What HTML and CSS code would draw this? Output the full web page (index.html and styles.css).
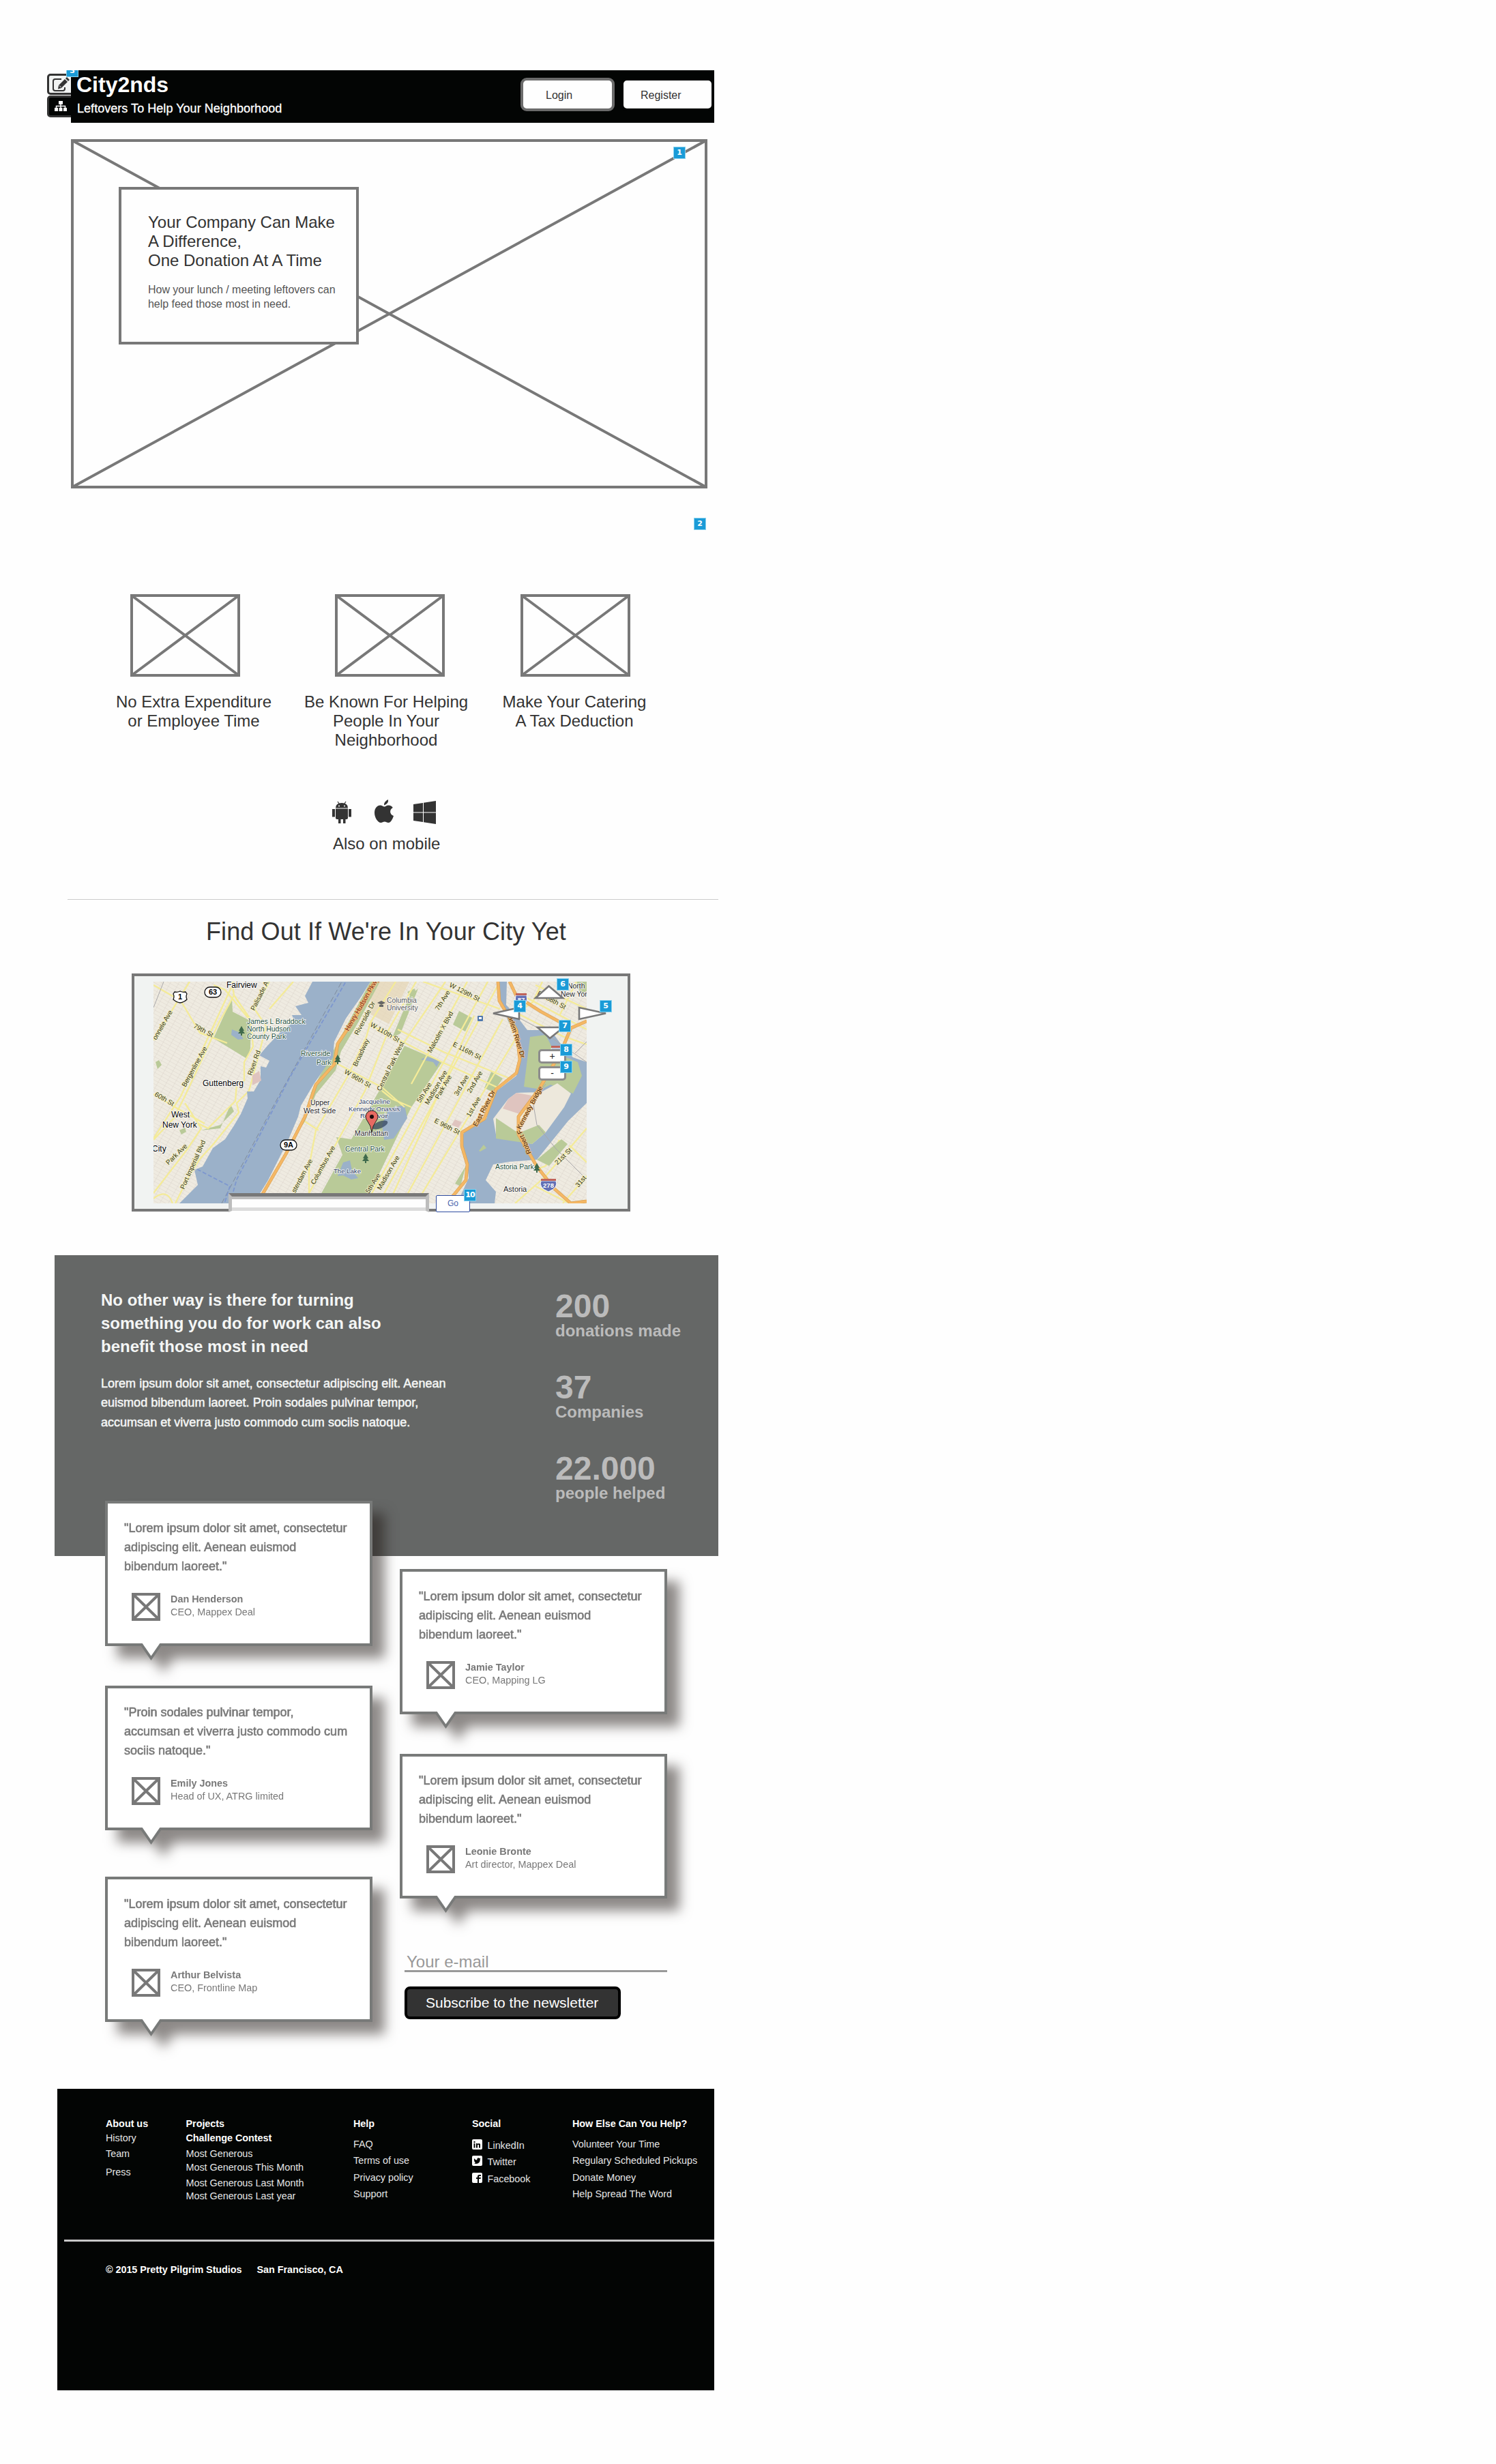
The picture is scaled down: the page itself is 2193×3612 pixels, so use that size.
FILE: index.html
```html
<!DOCTYPE html>
<html lang="en">
<head>
<meta charset="utf-8">
<title>City2nds</title>
<link rel="stylesheet" href="styles.css">
</head>
<body>
<header class="header">
  <div class="tools">
    <div class="tool tool-light"><svg width="26" height="24" viewBox="0 0 26 24"><path d="M14 3H5Q2 3 2 6V17Q2 20 5 20H16Q19 20 19 17V15" fill="none" stroke="#333" stroke-width="2"/><path d="M10 12L19 3L23 7L14 16L9 17.500Z" fill="#333"/><path d="M20 2L22 0L26 4L24 6Z" fill="#333"/><path d="M11 12.500L13.500 15" stroke="#f1f3f2"/></svg></div>
    <div class="tool tool-dark"><svg width="20" height="16" viewBox="0 0 20 16"><path d="M7 0h6v5H7zM1 10h5v5H1zM7.500 10h5v5h-5zM14 10h5v5h-5z" fill="#fff"/><path d="M10 4V10M3.500 10V7.500H16.500V10" stroke="#fff" stroke-width="1.500" fill="none"/></svg></div>
  </div>
  <div class="badge-clip"><span class="badge badge-3">3</span></div>
  <div class="brand">
    <h1 class="brand-name">City2nds</h1>
    <p class="brand-tag">Leftovers To Help Your Neighborhood</p>
  </div>
  <nav class="account">
    <a class="account-btn login">Login</a>
    <a class="account-btn register">Register</a>
  </nav>
</header>

<section class="hero">
  <svg class="hero-image" width="933" height="512"><path d="M2 2H931V510H2ZL931 510M931 2L2 510" class="wire"/></svg>
  <div class="hero-card">
    <h2 class="hero-title">Your Company Can Make<br>A Difference,<br>One Donation At A Time</h2>
    <p class="hero-text">How your lunch / meeting leftovers can<br>help feed those most in need.</p>
  </div>
  <span class="badge badge-1">1</span>
</section>

<section class="features">
  <span class="badge badge-2">2</span>
  <figure class="feature"><svg class="pic-a" width="161" height="121"><path d="M2 2H159V119H2ZL159 119M159 2L2 119" class="wire"/></svg><figcaption>No Extra Expenditure<br>or Employee Time</figcaption></figure>
  <figure class="feature"><svg class="pic-b" width="161" height="121"><path d="M2 2H159V119H2ZL159 119M159 2L2 119" class="wire"/></svg><figcaption>Be Known For Helping<br>People In Your<br>Neighborhood</figcaption></figure>
  <figure class="feature"><svg class="pic-c" width="161" height="121"><path d="M2 2H159V119H2ZL159 119M159 2L2 119" class="wire"/></svg><figcaption>Make Your Catering<br>A Tax Deduction</figcaption></figure>
</section>

<section class="mobile">
  <div class="mobile-icons">
    <svg width="28" height="34" viewBox="0 0 28 34"><path d="M5 10.500Q5 3 14 3Q23 3 23 10.500ZM5 11.500H23V25Q23 27 21 27H19.500V33H16V27H12.500V33H9V27H7Q5 27 5 25ZM0 12H4V23.500H0ZM24 12H28V23.500H24Z" fill="#333"/><path d="M8 1L10 4M20 1L18 4" stroke="#333" stroke-width="1.200"/><circle cx="10" cy="7.500" r="1" fill="#fff"/><circle cx="18" cy="7.500" r="1" fill="#fff"/></svg>
    <svg width="28" height="36" viewBox="0 0 28 36"><path d="M20 0Q21 6 14 8.500Q13.500 3 20 0Z" fill="#333"/><path d="M14.500 10.500C16 10.500 17.500 8.500 20.500 8.500C23.500 8.500 25.500 10 26.800 12C21.500 15 22 22 28 24C26.500 29 23.500 34 20.500 34C18 34 17 32.600 14.800 32.600C12.500 32.600 11.500 34 9.300 34C5 34 0 26.500 0 19.500C0 12.500 4 8.500 8.300 8.500C11 8.500 13 10.500 14.500 10.500Z" fill="#333"/></svg>
    <svg width="33" height="34" viewBox="0 0 33 34"><path d="M0 5L14 3V16.500H0ZM15 2.800L33 0V16.500H15ZM0 17.500H14V31L0 29ZM15 17.500H33V34L15 31.200Z" fill="#333"/></svg>
  </div>
  <p class="mobile-text">Also on mobile</p>
</section>

<section class="finder">
  <h2 class="finder-title">Find Out If We're In Your City Yet</h2>
  <div class="map-frame">
    <svg class="map" width="635" height="325" viewBox="0 0 635 325">
      <defs>
        <pattern id="blocks" width="11" height="5" patternUnits="userSpaceOnUse" patternTransform="rotate(29)"><path d="M0 0H11M0 0V5" stroke="#d2cbc1" stroke-width=".7" fill="none"/></pattern>
      </defs>
      <rect width="635" height="325" fill="#efebe1"/>
      <rect width="635" height="325" fill="url(#blocks)"/>
      <path d="M320 0H375L345 62L318 48Z" fill="#e5d5b5" opacity=".7"/>
      <g fill="#b9ca98">
        <path d="M115 24L88 83L137 113L142 98L143 58L116 44Z"/>
        <path d="M368 94L423 118L378 184L310 325H238L277 254L268 228L290 231L332 158Z"/>
        <path d="M448 43L467 53L457 73L439 63ZM495 132L512 142L498 162L485 156ZM375 22L388 10L362 76L350 82Z"/>
        <path d="M318 0H332L300 60L275 102L267 130L238 165L222 205L215 215L232 160Z"/>
        <path d="M3 118L8 115L12 122L6 128ZM98 215L113 180L118 190L98 210L80 215L70 218ZM372 15L383 10L385 18L377 22ZM38 218l8-4l2 6l-7 4ZM620 0H635V14L626 18Z"/>
      </g>
      <path d="M368 181L372 200L365 211L352 230L338 232L335 210L345 186ZM392 114L400 110L420 116L415 125L410 118ZM278 265L288 262L291 276L300 288L290 290L278 284L270 285Z" fill="#9bb1c9"/>
      <g class="road">
        <path d="M53 0L0 86M118 0L40 168L0 230M118 20L96 60L46 168L30 200L0 232M115 0L118 20L142 55L146 95L133 118L133 145L122 150L120 175L80 215L64 207M170 0L148 40L165 65L155 105L140 160L122 178L125 192L88 238L68 260L52 285L32 325M0 5L40 28L68 75L108 90M0 165L35 186L75 208M205 0L170 40M88 5L105 12L140 55M46 178L70 215L50 245L0 310M0 318Q20 302 28 325"/>
        <path d="M355 0L318 60L312 81L285 138L238 218L228 271L228 325M385 0L345 70L310 160L220 325M315 62L423 118L515 160M265 118L335 155L368 184M358 70L425 103L530 145M428 0L360 100M460 0L378 150M395 0L508 40M490 0L312 325M508 0L330 325M470 50L345 325M512 55L365 325M530 85L385 325M222 205L242 218M335 160L350 172L378 184"/>
        <path d="M540 20L635 70M530 45L600 80L635 92M570 0L556 30L520 55M620 0L595 50M560 5L635 40M560 85L590 105L600 98M530 325L575 285L635 215M610 240L635 265M560 300L610 325M600 325L635 285M595 232L575 270L562 275"/>
      </g>
      <g fill="#9bb1c9">
        <path d="M233 0L222 21L227 31L208 36L217 49L203 49L207 59L190 70L167 94L155 108L170 116L165 126L157 124L157 144L147 161L137 161L138 171L128 194L118 211L105 231L87 244L72 271L60 276L65 298L38 325H147L168 291L198 231L212 198L216 182L235 150L255 121L263 111L265 88L282 54L305 21L318 0Z"/>
        <path d="M503 0L508 28L520 58L535 81L538 114L532 138L498 164L488 201L455 221L450 238L460 264L462 288L445 325H500L502 308L487 291L498 268L522 264L562 261L608 204L635 178V118L615 111L602 98L582 71L548 71L535 54L517 34L518 0Z"/>
        <path d="M115 70L125 74L132 84L124 85L114 78Z"/>
      </g>
      <path d="M552 81L575 78L588 104L622 118L628 138L615 164L582 151L568 158L543 154L548 114Z" fill="#b9ca98"/>
      <path d="M520 172L532 163L568 162L592 149L612 164L602 184L575 221L555 238L502 224L498 201Z" fill="#ede8dc"/>
      <path d="M502 200L535 222L565 210L575 221L555 238L502 230ZM598 231L607 238L580 270L562 261ZM458 270L450 300L442 296ZM477 248l7-9l4 5l-9 5Z" fill="#b9ca98"/>
      <path d="M520 172L532 163L555 167L540 195L512 186ZM145 137L155 131L158 145L145 152ZM442 202L452 206L447 214L437 210Z" fill="#dfc4bf"/>
      <path d="M100 325L178 178L276 0" stroke="#7f8b9c" stroke-dasharray="8 4" fill="none"/>
      <path d="M112 325L122 290L200 140L282 0M64 275L112 300L104 325" stroke="#7d97cf" stroke-width="1.800" stroke-dasharray="6 3" fill="none"/>
      <path d="M530 50L560 66L635 118M575 150L556 175L562 210L590 245L635 290M618 105L635 88M0 38L15 0" stroke="#a9a8ab" fill="none"/>
      <g fill="none" stroke-linejoin="round">
        <path class="hw-edge" d="M325 0L295 54L270 91L265 121L238 151L222 198L195 251L152 325M505 0L507 28L532 71L537 114L532 134L502 158L485 201L452 221L452 241L460 268L458 291L430 325M522 0L532 21L568 44L612 68L635 58M612 68L598 101L585 124L565 158L535 198L535 224L562 271L588 304L612 325L635 322"/>
        <path class="hw" d="M325 0L295 54L270 91L265 121L238 151L222 198L195 251L152 325M505 0L507 28L532 71L537 114L532 134L502 158L485 201L452 221L452 241L460 268L458 291L430 325M522 0L532 21L568 44L612 68L635 58M612 68L598 101L585 124L565 158L535 198L535 224L562 271L588 304L612 325L635 322"/>
      </g>
      <g class="street">
        <text transform="translate(148 43) rotate(-63)">Palisade Av</text>
        <text transform="translate(4 86) rotate(-60)">onnele Ave</text>
        <text transform="translate(58 67) rotate(28)">79th St</text>
        <text transform="translate(144 138) rotate(-70)">River Rd</text>
        <text transform="translate(47 155) rotate(-61)">Bergenline Ave</text>
        <text transform="translate(1 167) rotate(30)">60th St</text>
        <text transform="translate(22 269) rotate(-44)">Park Ave</text>
        <text transform="translate(45 305) rotate(-66)">Port Imperial Blvd</text>
        <text class="red" transform="translate(286 73) rotate(-60)">Henry Hudson Pkwy</text>
        <text transform="translate(300 79) rotate(-62)">Riverside Dr</text>
        <text transform="translate(317 65) rotate(30)">W 110th St</text>
        <text transform="translate(298 125) rotate(-65)">Broadway</text>
        <text transform="translate(279 134) rotate(30)">W 96th St</text>
        <text transform="translate(333 161) rotate(-64)">Central Park West</text>
        <text transform="translate(236 298) rotate(-61)">Columbus Ave</text>
        <text transform="translate(208 310) rotate(-62)">sterdam Ave</text>
        <text transform="translate(316 311) rotate(-58)">5th Ave</text>
        <text transform="translate(333 306) rotate(-60)">Madison Ave</text>
        <text transform="translate(418 43) rotate(-58)">7th Ave</text>
        <text transform="translate(433 7) rotate(27)">W 129th St</text>
        <text transform="translate(407 105) rotate(-61)">Malcolm X Blvd</text>
        <text transform="translate(438 94) rotate(27)">E 116th St</text>
        <text transform="translate(391 178) rotate(-58)">5th Ave</text>
        <text transform="translate(403 181) rotate(-60)">Madison Ave</text>
        <text transform="translate(418 173) rotate(-60)">Park Ave</text>
        <text transform="translate(446 168) rotate(-60)">3rd Ave</text>
        <text transform="translate(465 164) rotate(-60)">2nd Ave</text>
        <text transform="translate(464 199) rotate(-60)">1st Ave</text>
        <text transform="translate(411 206) rotate(27)">E 96th St</text>
        <text class="brown" transform="translate(474 213) rotate(-62)">East River Dr</text>
        <text class="brown" transform="translate(520 52) rotate(73)">arlem River Dr</text>
        <text class="brown" transform="translate(538 217) rotate(-62)">Kennedy Bridge</text>
        <text class="brown" transform="translate(554 251) rotate(-114)">Robert F</text>
        <text transform="translate(562 19) rotate(28)">E 138th St</text>
        <text transform="translate(592 269) rotate(-44)">21st St</text>
        <text transform="translate(623 302) rotate(-50)">31st</text>
      </g>
      <g class="place">
        <text class="town" x="107" y="9">Fairview</text><text class="town" x="72" y="153">Guttenberg</text>
        <text class="town" x="26" y="199">West</text><text class="town" x="13" y="214">New York</text><text class="town" x="-2" y="249">City</text>
        <text class="park" x="137" y="62">James L Braddock</text><text class="park" x="137" y="73">North Hudson</text><text class="park" x="137" y="84">County Park</text>
        <text class="park" x="216" y="109">Riverside</text><text class="park" x="239" y="122">Park</text>
        <text x="230" y="181">Upper</text><text x="220" y="193">West Side</text>
        <text class="lake" x="301" y="179">Jacqueline</text><text class="lake" x="286" y="190">Kennedy Onassis</text><text class="lake" x="303" y="200">Reservoir</text>
        <text x="295" y="226">Manhattan</text><text class="park" x="281" y="249">Central Park</text><text class="lake" x="264" y="281">The Lake</text>
        <text class="school" x="342" y="31">Columbia</text><text class="school" x="342" y="42">University</text>
        <text x="607" y="10">North</text><text x="597" y="22">New Yor</text>
        <text class="park" x="501" y="275">Astoria Park</text><text class="astoria" x="513" y="308">Astoria</text>
      </g>
      <path d="M129 65l4 7h-2l3 4h-4v3h-2v-3h-4l3-4h-2ZM270 107l4 7h-2l3 4h-4v3h-2v-3h-4l3-4h-2ZM311 252l4 7h-2l3 4h-4v3h-2v-3h-4l3-4h-2ZM562 266l4 7h-2l3 4h-4v3h-2v-3h-4l3-4h-2Z" fill="#3f6a4c"/>
      <path d="M328 31l6-3l6 3l-6 3ZM331 34v3h6v-3Z" fill="#666"/>
      <rect x="475" y="50" width="8" height="8" rx="1" fill="#4f78ad"/><rect x="477" y="52" width="4" height="3" fill="#fff"/>
      <g class="shield">
        <path d="M31 15Q35 16 39 14Q43 16 47 15L49 18Q47 22 49 26Q45 30 39 31Q33 30 29 26Q31 22 29 18Z"/><text x="39" y="26">1</text>
        <rect x="75" y="8" width="24" height="15" rx="7.500"/><text x="87" y="19">63</text>
        <rect x="186" y="232" width="24" height="15" rx="7.500"/><text x="198" y="243">9A</text>
      </g>
      <g class="interstate">
        <path d="M531 20H547Q550 32 539 37Q528 32 531 20ZM568 292H590Q594 302 579 308Q564 302 568 292ZM583 98H597V110H583Z" fill="#6270b5" stroke="#fff"/>
        <path d="M531 17H547V20H531ZM568 289H590V292H568ZM583 94H597V97H583Z" fill="#c0635a"/>
        <text x="539" y="30">87</text><text x="579" y="302">278</text>
      </g>
      <ellipse cx="332" cy="210" rx="12" ry="5" transform="rotate(-22 332 210)" fill="#33465e" opacity=".75"/>
      <path d="M320 221Q319 211 314 205Q311 201 311 198A9 9 0 0 1 329 198Q329 201 326 205Q321 211 320 221Z" fill="#e66a62" stroke="#222"/>
      <circle cx="320" cy="198" r="3" fill="#1c0c0c"/>
    </svg>
    <svg class="pan pan-up" width="46" height="23"><path d="M3 20L22.500 2.500L43 20Z"/></svg>
    <svg class="pan pan-left" width="46" height="24"><path d="M5 12.500L43 4V21Z"/></svg>
    <svg class="pan pan-right" width="46" height="24"><path d="M41 12.500L2 4V21Z"/></svg>
    <svg class="pan pan-down" width="46" height="23"><path d="M4 3H42L22 19Z"/></svg>
    <button class="zoom zoom-in">+</button>
    <button class="zoom zoom-out">-</button>
    <div class="search"></div>
    <button class="go">Go</button>
    <span class="badge badge-4">4</span><span class="badge badge-5">5</span><span class="badge badge-6">6</span><span class="badge badge-7">7</span><span class="badge badge-8">8</span><span class="badge badge-9">9</span><span class="badge badge-10">10</span>
  </div>
</section>

<section class="band">
  <div class="pitch">
    <h2 class="pitch-title">No other way is there for turning<br>something you do for work can also<br>benefit those most in need</h2>
    <p class="pitch-text">Lorem ipsum dolor sit amet, consectetur adipiscing elit. Aenean<br>euismod bibendum laoreet. Proin sodales pulvinar tempor,<br>accumsan et viverra justo commodo cum sociis natoque.</p>
  </div>
  <dl class="stats">
    <div><dt>200</dt><dd>donations made</dd></div>
    <div><dt>37</dt><dd>Companies</dd></div>
    <div><dt>22.000</dt><dd>people helped</dd></div>
  </dl>
</section>

<section class="quotes">
  <div class="quote-col">
    <article class="quote">
      <p class="quote-text">"Lorem ipsum dolor sit amet, consectetur<br>adipiscing elit. Aenean euismod<br>bibendum laoreet."</p>
      <div class="author"><svg width="42" height="41"><path d="M2 2H40V39H2ZL40 39M40 2L2 39" class="wire"/></svg><div><b>Dan Henderson</b><br>CEO, Mappex Deal</div></div>
      <svg class="tail" width="35" height="25"><path d="M0 0H35L17.500 25Z" fill="#787a79"/><path d="M4 -1H31L17.500 18.500Z" fill="#fff"/></svg>
    </article>
    <article class="quote quote-short">
      <p class="quote-text">"Proin sodales pulvinar tempor,<br>accumsan et viverra justo commodo cum<br>sociis natoque."</p>
      <div class="author"><svg width="42" height="41"><path d="M2 2H40V39H2ZL40 39M40 2L2 39" class="wire"/></svg><div><b>Emily Jones</b><br>Head of UX, ATRG limited</div></div>
      <svg class="tail" width="35" height="25"><path d="M0 0H35L17.500 25Z" fill="#787a79"/><path d="M4 -1H31L17.500 18.500Z" fill="#fff"/></svg>
    </article>
    <article class="quote">
      <p class="quote-text">"Lorem ipsum dolor sit amet, consectetur<br>adipiscing elit. Aenean euismod<br>bibendum laoreet."</p>
      <div class="author"><svg width="42" height="41"><path d="M2 2H40V39H2ZL40 39M40 2L2 39" class="wire"/></svg><div><b>Arthur Belvista</b><br>CEO, Frontline Map</div></div>
      <svg class="tail" width="35" height="25"><path d="M0 0H35L17.500 25Z" fill="#787a79"/><path d="M4 -1H31L17.500 18.500Z" fill="#fff"/></svg>
    </article>
  </div>
  <div class="quote-col quote-col-right">
    <article class="quote">
      <p class="quote-text">"Lorem ipsum dolor sit amet, consectetur<br>adipiscing elit. Aenean euismod<br>bibendum laoreet."</p>
      <div class="author"><svg width="42" height="41"><path d="M2 2H40V39H2ZL40 39M40 2L2 39" class="wire"/></svg><div><b>Jamie Taylor</b><br>CEO, Mapping LG</div></div>
      <svg class="tail" width="35" height="25"><path d="M0 0H35L17.500 25Z" fill="#787a79"/><path d="M4 -1H31L17.500 18.500Z" fill="#fff"/></svg>
    </article>
    <article class="quote quote-short">
      <p class="quote-text">"Lorem ipsum dolor sit amet, consectetur<br>adipiscing elit. Aenean euismod<br>bibendum laoreet."</p>
      <div class="author"><svg width="42" height="41"><path d="M2 2H40V39H2ZL40 39M40 2L2 39" class="wire"/></svg><div><b>Leonie Bronte</b><br>Art director, Mappex Deal</div></div>
      <svg class="tail" width="35" height="25"><path d="M0 0H35L17.500 25Z" fill="#787a79"/><path d="M4 -1H31L17.500 18.500Z" fill="#fff"/></svg>
    </article>
    <form class="newsletter">
      <div class="email">Your e-mail</div>
      <div class="subscribe">Subscribe to the newsletter</div>
    </form>
  </div>
</section>

<footer class="footer">
  <div class="links">
    <ul class="col about"><li>About us</li><li>History</li><li>Team</li><li>Press</li></ul>
    <ul class="col projects"><li>Projects</li><li>Challenge Contest</li><li>Most Generous</li><li>Most Generous This Month</li><li>Most Generous Last Month</li><li>Most Generous Last year</li></ul>
    <ul class="col spaced help"><li>Help</li><li>FAQ</li><li>Terms of use</li><li>Privacy policy</li><li>Support</li></ul>
    <ul class="col spaced social"><li>Social</li>
      <li><svg width="15" height="15"><rect width="15" height="15" rx="2" fill="#fff"/><path d="M2.500 6h2v6.500h-2zM2.500 3h2v2h-2zM6 6h2v1Q10 5 12 7V12.500H10V8.500Q9 7 8 8.500V12.500H6Z" fill="#030504"/></svg>LinkedIn</li>
      <li><svg width="15" height="15"><rect width="15" height="15" rx="2" fill="#fff"/><path d="M3 4Q5 6.500 7.300 6.500Q7 3.500 9.300 3.300L11 4L12.500 3.700L11.800 5Q12 12 5.500 12L3 11.200L5 10.500L3.500 8.800Q2.500 6 3 4Z" fill="#030504"/></svg>Twitter</li>
      <li><svg width="15" height="15"><rect width="15" height="15" rx="2" fill="#fff"/><path d="M8 15V9H6V7H8V5.500Q8 3 10.500 3H13V5H11Q10 5 10 6V7H13L12.500 9H10V15Z" fill="#030504"/></svg>Facebook</li></ul>
    <ul class="col spaced"><li>How Else Can You Help?</li><li>Volunteer Your Time</li><li>Regulary Scheduled Pickups</li><li>Donate Money</li><li>Help Spread The Word</li></ul>
  </div>
  <div class="rule"></div>
  <p class="legal"><span>© 2015 Pretty Pilgrim Studios</span><span>San Francisco, CA</span></p>
</footer>
</body>
</html>
```
FILE: styles.css
```css
* { box-sizing: border-box; margin: 0; padding: 0; }
body { background: #fefefe; color: #333; font-family: "Liberation Sans", Arial, sans-serif; padding-top: 103px; white-space: nowrap; }
svg { display: block; flex: none; }
.wire { fill: none; stroke: #787878; stroke-width: 4; }

.badge { position: absolute; width: 18px; height: 18px; border: 1px solid #8ad2ee; background: #1a9bd7; color: #fff; font: bold 11px/16px "DejaVu Sans", sans-serif; text-align: center; }
.badge-clip { position: absolute; left: -7px; top: 0; width: 18px; height: 10px; overflow: hidden; }
.badge-3 { left: 0; top: -8px; }
.badge-1 { left: 883px; top: 11px; }
.badge-2 { left: 913px; top: 43px; }
.badge-4 { left: 556px; top: 35px; }
.badge-5 { left: 682px; top: 35px; }
.badge-6 { left: 619px; top: 3px; }
.badge-7 { left: 622px; top: 64px; }
.badge-8 { left: 624px; top: 99px; }
.badge-9 { left: 624px; top: 124px; }
.badge-10 { left: 483px; top: 312px; letter-spacing: -1px; }

.header { position: relative; display: flex; justify-content: space-between; width: 943px; height: 77px; margin-left: 104px; padding-left: 8px; background: #030504; color: #fff; }
.tools { position: absolute; left: -35px; top: 5px; width: 35px; display: grid; gap: 1px; overflow: hidden; }
.tool { width: 42px; height: 31px; border: 3px solid #333; border-radius: 5px; padding: 2px 0 0 4px; background: #f1f3f2; }
.tool-dark { height: 32px; background: #030504; padding: 5px 0 0 7px; }
.brand { padding-top: 3px; }
.brand-name { font: bold 32px/36px "Liberation Sans", Arial, sans-serif; }
.brand-tag { margin: 7px 0 0 1px; font-size: 18px; line-height: 20px; letter-spacing: .04px; -webkit-text-stroke: .3px; }
.account { display: flex; gap: 9px; padding-top: 11px; }
.account-btn { height: 49px; border: 4px solid #6b6b6b; border-radius: 9px; background: #fefefe; color: #333; font-size: 16px; line-height: 43px; }
.login { width: 138px; padding-left: 33px; }
.register { width: 137px; border-color: #030504; padding-left: 25px; }

.hero { position: relative; display: grid; width: 933px; margin: 24px 0 0 104px; }
.hero-image, .hero-card { grid-area: 1 / 1; }
.hero-card { width: 352px; height: 231px; margin: 70px 0 0 70px; border: 4px solid #787878; background: #fefefe; padding: 34px 0 0 39px; }
.hero-title { font-weight: 400; font-size: 24px; line-height: 28px; }
.hero-text { margin-top: 18px; font-size: 16px; line-height: 21px; letter-spacing: -.03px; color: #555; }

.features { position: relative; display: flex; margin-left: 104px; padding: 155px 0 0 60px; }
.feature { width: 240px; }
.feature:nth-of-type(1) { margin-right: 42px; }
.feature:nth-of-type(2) { margin-right: 36px; }
.feature figcaption { margin-top: 23px; text-align: center; font-size: 24px; line-height: 28px; }
.pic-a { margin-left: 27px; }
.pic-b { margin-left: 45px; }
.pic-c { margin-left: 41px; }

.mobile { margin: 73px 0 0 487px; }
.mobile-icons { display: flex; align-items: flex-end; height: 36px; }
.mobile-icons svg:nth-child(2) { margin: 0 29px 0 34px; }
.mobile-text { margin: 15px 0 0 1px; font-size: 24px; line-height: 28px; }

.finder { width: 954px; margin: 67px 0 0 99px; border-top: 1px solid #ccc; padding-top: 26px; }
.finder-title { padding-left: 203px; font-weight: 400; font-size: 36px; line-height: 42px; letter-spacing: .1px; }
.map-frame { position: relative; width: 731px; height: 349px; margin: 40px 0 0 94px; border: 4px solid #787878; background: #f1f3f2; padding: 8px 0 0 28px; }
.map { overflow: hidden; font-size: 9.800px; }
.map text { paint-order: stroke; stroke: #fff; stroke-width: 1.600px; stroke-linejoin: round; fill: #222; }
.map .street text { stroke: #f8f3c4; fill: #33331a; }
.map .street .red { stroke: #efbd80; fill: #842a10; }
.map .street .brown { stroke: #f3c481; fill: #4a2608; }
.map .place { font-size: 10.400px; }
.map .town { font-size: 12px; fill: #000; }
.map .astoria { font-size: 11px; }
.map .park { fill: #23503a; }
.map .lake { fill: #24365c; font-size: 9.600px; }
.map .school { fill: #555; }
.road { fill: none; stroke: #f4eb98; stroke-width: 2.300; }
.hw-edge { stroke: #d9a050; stroke-width: 4.800; }
.hw { stroke: #f4b765; stroke-width: 3.600; }
.shield path, .shield rect { fill: #fff; stroke: #111; stroke-width: 1.300; }
.map .shield text { font-weight: 700; font-size: 11px; text-anchor: middle; fill: #000; }
.map .interstate text { font-weight: 700; font-size: 9.500px; text-anchor: middle; fill: #fff; stroke: none; }
.pan { position: absolute; }
.pan path { fill: #fff; stroke: #787878; stroke-width: 2.600; }
.pan-up { left: 585px; top: 12px; }
.pan-left { left: 521px; top: 42px; }
.pan-right { left: 650px; top: 42px; }
.pan-down { left: 587px; top: 72px; }
.zoom { position: absolute; left: 592px; width: 41px; height: 21px; border: 3px solid #8c8c8c; border-radius: 5px; background: #fff; color: #222; font: 14px/15px "Liberation Sans", sans-serif; }
.zoom-in { top: 107px; }
.zoom-out { top: 132px; }
.search { position: absolute; left: 138px; top: 318px; width: 294px; height: 28px; background: #fefefe; border: 5px solid #bdbdbd; border-top: 5px solid #787878; border-bottom: 2px solid #fefefe; box-shadow: inset 0 4px #bdbdbd, inset 0 -5px #dcdcdc; }
.go { position: absolute; left: 442px; top: 321px; width: 50px; height: 25px; border: 1px solid #2f4da0; border-radius: 2px; background: #fff; color: #4a64ad; font: 12px/23px "Liberation Sans", sans-serif; }

.band { display: flex; width: 973px; height: 441px; margin: 64px 0 0 80px; background: #656766; padding-left: 68px; }
.pitch { width: 666px; padding-top: 49px; color: #f4f6f5; }
.pitch-title { font-size: 24px; line-height: 34px; }
.pitch-text { margin-top: 23px; font-size: 18px; line-height: 28.400px; letter-spacing: .02px; -webkit-text-stroke: .5px; }
.stats { display: grid; align-content: start; gap: 47px; padding-top: 53px; color: #bbb; font-weight: 700; }
.stats dt { font-size: 48px; line-height: 44px; }
.stats dd { font-size: 24px; line-height: 28px; }

.quotes { position: relative; display: flex; gap: 40px; margin: -81px 0 0 154px; }
.quote-col-right { padding-top: 100px; }
.quote { position: relative; width: 392px; height: 213px; margin-bottom: 58px; border: 4px solid #787a79; background: #fff; padding: 22px 0 0 24px; filter: drop-shadow(18px 18px 9px rgba(28, 20, 15, .5)); color: #787878; }
.quote-short { height: 212px; margin-bottom: 68px; padding-top: 21px; }
.quote:last-of-type { margin-bottom: 0; }
.quote-text { font-size: 18px; line-height: 28px; -webkit-text-stroke: .6px; }
.author { display: flex; gap: 15px; margin: 25px 0 0 11px; font-size: 14.400px; line-height: 19px; }
.tail { position: absolute; left: 46px; top: 100%; }
.newsletter { width: 385px; margin: 81px 0 0 7px; }
.email { padding-left: 3px; border-bottom: 3px solid #999; color: #999; font-size: 24px; line-height: 24px; }
.subscribe { width: 317px; height: 48px; margin-top: 21px; border: 4px solid #000; border-radius: 8px; background: #333; color: #fff; font-size: 21px; line-height: 40px; padding-left: 27px; }

.footer { width: 963px; height: 442px; margin: 98px 0 0 84px; background: #030504; color: #fff; font-size: 14.400px; line-height: 18px; }
.links { display: flex; height: 221px; padding: 42px 0 0 71px; }
.col { list-style: none; }
.col li { color: #e4e4e4; letter-spacing: -.03px; }
.col li:first-child { font-weight: 700; color: #fff; }
.about { width: 117.500px; }
.about li:nth-child(2) { margin-top: 3px; }
.about li:nth-child(3) { margin-top: 5px; }
.about li:nth-child(4) { margin-top: 9px; }
.projects { width: 245.500px; }
.projects li:nth-child(2) { margin-top: 3px; font-weight: 700; color: #fff; }
.projects li:nth-child(3) { margin-top: 5px; }
.projects li:nth-child(4) { margin-top: 2px; }
.projects li:nth-child(5) { margin-top: 5px; }
.projects li:nth-child(6) { margin-top: 1px; }
.help { width: 174px; }
.spaced li { margin-top: 6px; }
.spaced li:first-child { margin-top: 0; }
.spaced li:nth-child(2) { margin-top: 12px; }
.spaced li:nth-child(4) { margin-top: 7px; }
.social { width: 147px; }
.social li { display: flex; gap: 7.500px; }
.social li:nth-child(2) { margin-top: 14px; }
.rule { height: 3px; margin-left: 10px; background: #c8c8c8; }
.legal { display: flex; gap: 22px; padding: 32px 0 0 71px; font-weight: 700; letter-spacing: -.05px; }
```
